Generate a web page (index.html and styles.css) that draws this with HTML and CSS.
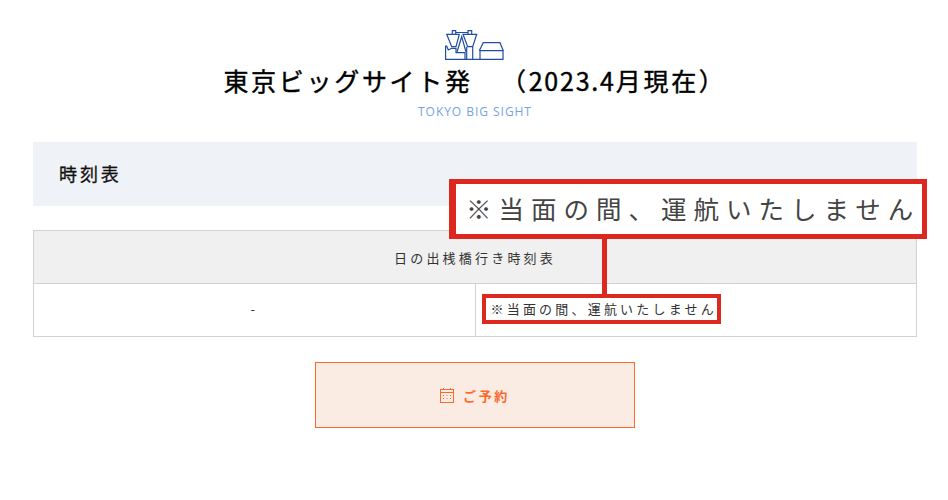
FILE: index.html
```html
<!DOCTYPE html>
<html lang="ja">
<head>
    <meta charset="UTF-8">
    <meta name="viewport" content="width=device-width, initial-scale=1.0">
    <title>時刻表</title>
    <link rel="stylesheet" href="styles.css">
</head>
<body>

<div class="page">
    <div class="title-block">
        <svg class="logo" width="60" height="30" viewBox="0 0 60 30" fill="none">
            <g stroke="#1f4fa0" stroke-width="1.200">
                <path d="M.6 16H1.700L3.300 20L6.700 18.300H11V22.700H20V29.300H.6Z"/>
                <path d="M1.700 4.300H14.300L11 16.700H6.700Z"/>
                <path d="M18 4.300H31.700L27.700 16.700H22.700Z"/>
                <path d="M7.300 4.300V.6H10.700V4.300M23 4.300V.6H26.700V4.300M10.700 2.500H23"/>
                <path d="M12 22L16.700 6.700L21 22"/>
                <path d="M21.700 16.700V29.300M27.700 16.700V29.300M20 29.300H58.500"/>
                <path d="M35 29.300V20.700H58V29.300"/>
                <path d="M34.300 20.700L38.300 12.700H55L58.300 20.700"/>
            </g>
        </svg>
        <h1 class="main-title">東京ビッグサイト発　<span class="title-date">（<span class="title-num">2023.4</span>月現在）</span></h1>
        <p class="sub-title">TOKYO BIG SIGHT</p>
    </div>

    <h2 class="section-head">時刻表</h2>

    <table class="timetable">
        <thead>
            <tr><th colspan="2">日の出桟橋行き時刻表</th></tr>
        </thead>
        <tbody>
            <tr>
                <td class="cell-center">-</td>
                <td><span class="notice-text">※当面の間、運航いたしません</span></td>
            </tr>
        </tbody>
    </table>

    <div class="btn-row">
        <a class="reserve-btn" href="#">
            <svg width="14" height="15" viewBox="0 0 14 15" fill="none" stroke="#fb6a2c" stroke-width="1">
                <rect x=".5" y="1.500" width="13" height="13"/>
                <path d="M.5 4.500H13.500M3.500 0V1.500M10.500 0V1.500"/>
                <path d="M3 7.500H4M6.500 7.500H7.500M10 7.500H11M3 10.500H4M6.500 10.500H7.500M10 10.500H11"/>
            </svg>
            <span>ご予約</span>
        </a>
    </div>
</div>

<!-- annotation laid over the table -->
<div class="zoom-box">※当面の間、運航いたしません</div>
<div class="zoom-line"></div>
<div class="zoom-target"></div>

</body>
</html>
```

FILE: styles.css
```css
body {
    margin: 0;
    background-color: #fff;
    color: #333;
    font-family: "Noto Sans CJK JP", "Noto Sans", sans-serif;
    height: 500px;
    overflow: hidden;
    position: relative;
}
.page {
    padding: 30px 31px 0 33px;
}
.title-block {
    text-align: center;
    margin-bottom: 22px;
}
.logo {
    display: block;
    margin: 0 auto;
}
.main-title {
    margin: 2px 0 0;
    font-size: 25px;
    line-height: 36px;
    font-weight: 400;
    letter-spacing: 2.700px;
    color: #000;
    white-space: nowrap;
    -webkit-text-stroke: 0.4px #000;
}
.title-date {
    margin-left: 13px;
}
.title-num {
    letter-spacing: 1.800px;
}
.sub-title {
    margin: 6px 0 0;
    font-family: "Open Sans", sans-serif;
    font-size: 12px;
    line-height: 16px;
    letter-spacing: 0.08em;
    color: #74a3e4;
}
.section-head {
    margin: 0 0 24px;
    padding: 0 26px;
    height: 64px;
    line-height: 62px;
    background-color: #eff2f6;
    font-size: 18px;
    font-weight: 400;
    letter-spacing: 0.16em;
    color: #111;
    -webkit-text-stroke: 0.3px #111;
}
.timetable {
    width: 100%;
    border-collapse: collapse;
    table-layout: fixed;
    font-size: 13px;
    letter-spacing: 3.200px;
}
.timetable th, .timetable td {
    border: 1px solid #d2d2d2;
    height: 52px;
    padding: 0 15px;
    font-weight: 400;
}
.timetable th {
    background-color: #f0f0f0;
    text-align: center;
}
.timetable td {
    height: 49px;
    padding-bottom: 3px;
}
.timetable td.cell-center {
    text-align: center;
}
.btn-row {
    display: flex;
    justify-content: center;
    margin-top: 25px;
}
.reserve-btn {
    display: flex;
    align-items: center;
    justify-content: center;
    gap: 9px;
    width: 318px;
    height: 64px;
    border: 1px solid #fb6a2c;
    background-color: #faebe3;
    color: #fb6a2c;
    font-size: 13px;
    font-weight: 700;
    letter-spacing: 0.2em;
    text-decoration: none;
}
.zoom-box {
    position: absolute;
    left: 449px;
    top: 179px;
    width: 478px;
    height: 60px;
    box-sizing: border-box;
    border: 5px solid #dc281e;
    border-left-width: 7px;
    background-color: #fff;
    font-size: 25.500px;
    line-height: 48px;
    padding-left: 10px;
    letter-spacing: 7px;
    white-space: nowrap;
    overflow: hidden;
    color: #444;
}
.zoom-line {
    position: absolute;
    left: 602px;
    top: 239px;
    width: 5px;
    height: 56px;
    background-color: #dc281e;
}
.zoom-target {
    position: absolute;
    left: 482px;
    top: 294px;
    width: 239px;
    height: 30px;
    box-sizing: border-box;
    border: 4px solid #dc281e;
}
```
